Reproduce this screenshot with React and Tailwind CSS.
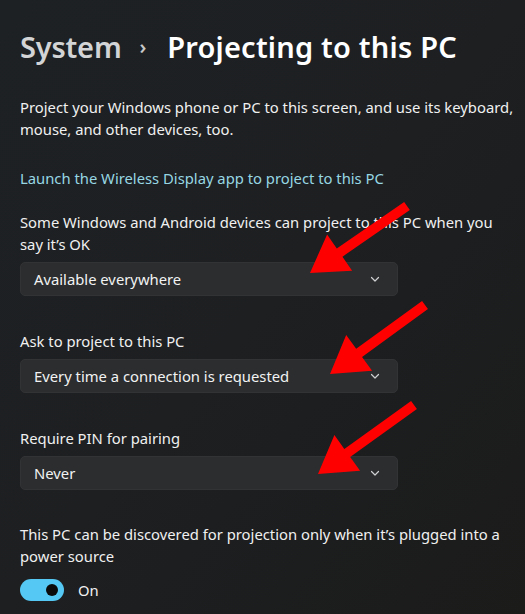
import React from 'react';

const font = { fontFamily: '"Noto Sans", "Open Sans", sans-serif' };

// red arrow from tail to tip, drawn over the page
const arrowPoints = (tail, tip, shaft = 5, headLen = 36, headHalf = 22) => {
  const dx = tail[0] - tip[0];
  const dy = tail[1] - tip[1];
  const len = Math.hypot(dx, dy);
  const ux = dx / len;
  const uy = dy / len;
  const nx = -uy;
  const ny = ux;
  const bx = tip[0] + ux * headLen;
  const by = tip[1] + uy * headLen;
  const pts = [
    [tip[0], tip[1]],
    [bx + nx * headHalf, by + ny * headHalf],
    [bx + nx * shaft, by + ny * shaft],
    [tail[0] + nx * shaft, tail[1] + ny * shaft],
    [tail[0] - nx * shaft, tail[1] - ny * shaft],
    [bx - nx * shaft, by - ny * shaft],
    [bx - nx * headHalf, by - ny * headHalf],
  ];
  return pts.map((p) => p.join(',')).join(' ');
};

const arrows = [
  { tail: [407, 206], tip: [310, 273] },
  { tail: [425, 305], tip: [330, 374] },
  { tail: [414, 405], tip: [318, 474] },
];

const Chevron = () => (
  <svg width="12" height="12" viewBox="0 0 12 12" className="text-[#d0d0d0]">
    <path d="M2.5 4.5 L6 8 L9.5 4.5" fill="none" stroke="currentColor" strokeWidth="1.2" strokeLinecap="round" strokeLinejoin="round" />
  </svg>
);

const Dropdown = ({ value }) => (
  <div className="w-[378px] h-[34px] rounded-[5px] bg-[#2b2d2f] border border-[#313335] flex items-center justify-between pl-[13px] pr-[16px] text-[14.8px] text-[#f2f2f2]">
    <span>{value}</span>
    <Chevron />
  </div>
);

const Label = ({ children, className = '' }) => (
  <p className={`text-[14.8px] leading-[22px] text-[#f0f0f0] ${className}`}>{children}</p>
);

export default function App() {
  return (
    <div className="relative w-[525px] h-[614px] overflow-hidden bg-gradient-to-br from-[#1e2124] via-[#1d1f21] to-[#1b1b1a]" style={font}>
      <div className="pl-5 pr-[8px] pt-[27px] flex flex-col">
        <h1 className="flex items-center h-[40px] text-[29px] tracking-[-0.2px]">
          <span className="text-[#d2d4d6] font-semibold">System</span>
          <span className="text-[#c8c8c8] text-[20px] ml-[18px] mr-[21px] font-semibold">›</span>
          <span className="text-white font-semibold tracking-[0.2px]">Projecting to this PC</span>
        </h1>

        <Label className="mt-[29px]">
          Project your Windows phone or PC to this screen, and use its keyboard, mouse, and other devices, too.
        </Label>

        <a className="mt-[27px] text-[14.8px] leading-[22px] text-[#97d7e3]">
          Launch the Wireless Display app to project to this PC
        </a>

        <Label className="mt-[22px] pr-[12px]">
          Some Windows and Android devices can project to this PC when you say it’s OK
        </Label>
        <div className="mt-[7px]">
          <Dropdown value="Available everywhere" />
        </div>

        <Label className="mt-[34px]">Ask to project to this PC</Label>
        <div className="mt-[7px]">
          <Dropdown value="Every time a connection is requested" />
        </div>

        <Label className="mt-[34px]">Require PIN for pairing</Label>
        <div className="mt-[7px]">
          <Dropdown value="Never" />
        </div>

        <Label className="mt-[33px]">
          This PC can be discovered for projection only when it’s plugged into a power source
        </Label>

        <div className="mt-[12px] flex items-center gap-[14px]">
          <div className="w-[44px] h-[22px] rounded-full bg-[#55c8f3] flex items-center justify-end pr-[6px]">
            <div className="w-[12px] h-[12px] rounded-full bg-[#0b0b0b]" />
          </div>
          <span className="text-[14.8px] text-[#f0f0f0]">On</span>
        </div>
      </div>

      <svg className="absolute inset-0 pointer-events-none" width="525" height="614">
        {arrows.map((a, i) => (
          <polygon key={i} points={arrowPoints(a.tail, a.tip)} fill="#ff0000" />
        ))}
      </svg>
    </div>
  );
}
